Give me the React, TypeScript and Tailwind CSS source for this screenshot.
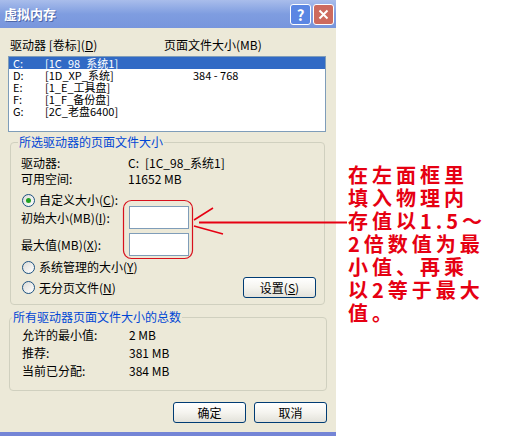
import React from "react";

const drives = [
  { letter: "C:", label: "[1C_98_系统1]", size: "", selected: true },
  { letter: "D:", label: "[1D_XP_系统]", size: "384 - 768" },
  { letter: "E:", label: "[1_E_工具盘]", size: "" },
  { letter: "F:", label: "[1_F_备份盘]", size: "" },
  { letter: "G:", label: "[2C_老盘6400]", size: "" },
];

const note = ["在左面框里", "填入物理内", "存值以1.5～", "2倍数值为最", "小值、再乘", "以2等于最大", "值。"];

function Key({ k }: { k: string }) {
  return (
    <span>
      (<span className="underline underline-offset-1">{k}</span>)
    </span>
  );
}

function Radio({ checked }: { checked?: boolean }) {
  return (
    <span className="flex h-[13px] w-[13px] shrink-0 items-center justify-center rounded-full border border-[#1c5180] bg-linear-to-br from-[#dcdcd7] to-white">
      {checked && <span className="h-[5px] w-[5px] rounded-full bg-[#21a121]" />}
    </span>
  );
}

function XpButton({ children }: { children: React.ReactNode }) {
  return (
    <div className="flex h-[21px] w-[73px] items-center justify-center rounded-[3px] border border-[#003c74] bg-linear-to-b from-white via-[#f5f4ef] to-[#e3e2da] text-[12px]">
      {children}
    </div>
  );
}

export default function App() {
  return (
    <div className="relative flex h-[436px] w-[512px] overflow-hidden bg-white font-['Noto_Sans_CJK_SC','Liberation_Sans',sans-serif]">
      {/* dialog */}
      <div className="flex h-full w-[336px] flex-col">
        <div className="flex h-[28px] items-center justify-between bg-linear-to-b from-[#a9bdeb] via-[#7f9de0] to-[#7896dd] pl-[4px] pr-[2px]">
          <span className="text-[13px] font-bold text-white [text-shadow:1px_1px_0_#4d66a8]">虚拟内存</span>
          <div className="flex gap-[2px]">
            <div className="flex h-[21px] w-[21px] items-center justify-center rounded-[3px] border border-white bg-[#5b86e3] text-[15px] font-bold leading-none text-white">
              ?
            </div>
            <div className="flex h-[21px] w-[21px] items-center justify-center rounded-[3px] border border-white bg-[#cd6a5e]">
              <svg width="11" height="11" viewBox="0 0 11 11">
                <path d="M1.5 1.5 L9.5 9.5 M9.5 1.5 L1.5 9.5" stroke="white" strokeWidth="2" />
              </svg>
            </div>
          </div>
        </div>

        <div className="flex flex-1 flex-col bg-[#ece9d8] text-[12px] text-black">
          <div className="mt-[9px] flex h-[16px] pl-[10px] leading-[16px]">
            <span className="w-[154px]">
              驱动器 [卷标]<Key k="D" />
            </span>
            <span>页面文件大小(MB)</span>
          </div>

          <div className="mt-[3px] ml-[8px] mr-[10px] h-[76px] border border-[#7f9db9] bg-white text-[11px]">
            {drives.map((d) => (
              <div
                key={d.letter}
                className={`flex h-[12px] leading-[12px] ${d.selected ? "bg-[#316ac5] text-white" : ""}`}
              >
                <span className="w-[36px] pl-[4px]">{d.letter}</span>
                <span className="w-[148px]">{d.label}</span>
                <span>{d.size}</span>
              </div>
            ))}
          </div>

          <fieldset className="mt-[3px] ml-[10px] mr-[11px] rounded-[4px] border border-[#d0d0bf]">
            <legend className="ml-[7px] px-[1px] leading-[14px] text-[#0046d5]">所选驱动器的页面文件大小</legend>
            <div className="flex flex-col pb-[6px] pl-[10px] pr-[8px]">
              <div className="mt-[6px] flex h-[16px] leading-[16px]">
                <span className="w-[107px]">驱动器:</span>
                <span className="w-[17px]">C:</span>
                <span>[1C_98_系统1]</span>
              </div>
              <div className="flex h-[16px] leading-[16px]">
                <span className="w-[107px]">可用空间:</span>
                <span>11652 MB</span>
              </div>
              <div className="mt-[7px] flex h-[12px] items-center gap-[4px] pl-[1px]">
                <Radio checked />
                <span>
                  自定义大小<Key k="C" />:
                </span>
              </div>
              <div className="flex h-[23px] items-center">
                <span className="w-[108px]">
                  初始大小(MB)<Key k="I" />:
                </span>
                <div className="h-[23px] w-[60px] border border-[#7f9db9] bg-white" />
              </div>
              <div className="mt-[4px] flex h-[23px] items-center">
                <span className="w-[108px]">
                  最大值(MB)<Key k="X" />:
                </span>
                <div className="h-[23px] w-[60px] border border-[#7f9db9] bg-white" />
              </div>
              <div className="mt-[5px] flex h-[12px] items-center gap-[4px] pl-[1px]">
                <Radio />
                <span>
                  系统管理的大小<Key k="Y" />
                </span>
              </div>
              <div className="mt-[4px] flex h-[21px] items-center justify-between">
                <div className="flex items-center gap-[4px] pl-[1px]">
                  <Radio />
                  <span>
                    无分页文件<Key k="N" />
                  </span>
                </div>
                <XpButton>
                  设置<Key k="S" />
                </XpButton>
              </div>
            </div>
          </fieldset>

          <fieldset className="mt-[5px] ml-[9px] mr-[9px] rounded-[4px] border border-[#d0d0bf]">
            <legend className="ml-[2px] px-[1px] leading-[14px] text-[#0046d5]">所有驱动器页面文件大小的总数</legend>
            <div className="flex flex-col pb-[10px] pl-[12px]">
              <div className="mt-[2px] flex h-[18px] leading-[18px]">
                <span className="w-[107px]">允许的最小值:</span>
                <span>2 MB</span>
              </div>
              <div className="flex h-[18px] leading-[18px]">
                <span className="w-[107px]">推荐:</span>
                <span>381 MB</span>
              </div>
              <div className="flex h-[18px] leading-[18px]">
                <span className="w-[107px]">当前已分配:</span>
                <span>384 MB</span>
              </div>
            </div>
          </fieldset>

          <div className="mt-[11px] flex justify-end gap-[8px] pr-[9px]">
            <XpButton>确定</XpButton>
            <XpButton>取消</XpButton>
          </div>
        </div>
        <div className="h-[4px] bg-[#7485d6]" />
      </div>

      {/* annotation text */}
      <div className="flex-1 pl-[12px] pt-[163px]">
        {note.map((line) => (
          <div key={line} className="whitespace-nowrap text-[20px] font-bold leading-[23px] tracking-[4px] text-[#e60012]">
            {line}
          </div>
        ))}
      </div>

      {/* red box and arrow drawn over the dialog */}
      <svg className="pointer-events-none absolute left-0 top-0" width="512" height="436">
        <rect x="123.5" y="200.5" width="69" height="58" rx="8" fill="none" stroke="#d8101c" strokeWidth="1.2" />
        <path d="M199 222.5 H347" stroke="#e60012" strokeWidth="2" />
        <path d="M194 220 L213 208 M194 226 L223 234" stroke="#e60012" strokeWidth="1.5" fill="none" />
      </svg>
    </div>
  );
}
